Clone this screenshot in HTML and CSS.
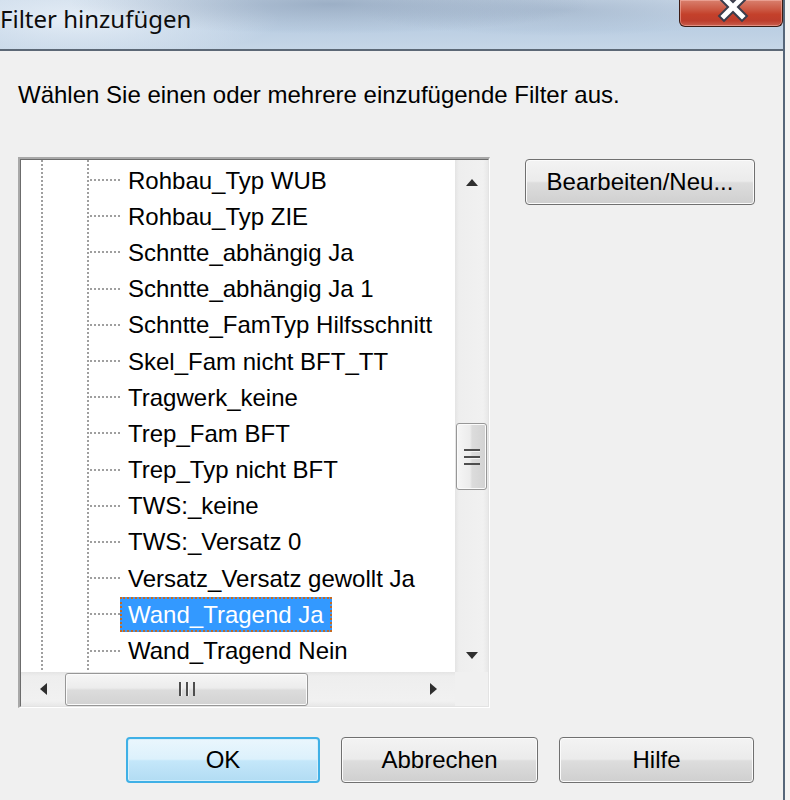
FILE: index.html
```html
<!DOCTYPE html>
<html lang="de">
<head>
<meta charset="utf-8">
<title>Filter hinzufügen</title>
<link rel="stylesheet" href="styles.css">
</head>
<body>
<div class="window">
  <div class="titlebar">
    <span class="title">Filter hinzufügen</span>
    <div class="close">
      <svg class="close-x" width="34" height="28" viewBox="0 0 34 28">
        <path d="M8 1 L26 19 M26 1 L8 19" stroke="#3a3d4c" stroke-width="9" stroke-linecap="square" fill="none"/>
        <path d="M8 1 L26 19 M26 1 L8 19" stroke="#ffffff" stroke-width="5" stroke-linecap="square" fill="none"/>
      </svg>
    </div>
  </div>
  <div class="client">
    <p class="prompt">Wählen Sie einen oder mehrere einzufügende Filter aus.</p>
    <div class="main">
      <div class="treebox">
        <div class="treeinner">
          <div class="tree-area">
            <ul class="tree">
              <li class="row"><span class="conn"></span><span class="label">Rohbau_Typ WUB</span></li>
              <li class="row"><span class="conn"></span><span class="label">Rohbau_Typ ZIE</span></li>
              <li class="row"><span class="conn"></span><span class="label">Schntte_abhängig Ja</span></li>
              <li class="row"><span class="conn"></span><span class="label">Schntte_abhängig Ja 1</span></li>
              <li class="row"><span class="conn"></span><span class="label">Schntte_FamTyp Hilfsschnitt</span></li>
              <li class="row"><span class="conn"></span><span class="label">Skel_Fam nicht BFT_TT</span></li>
              <li class="row"><span class="conn"></span><span class="label">Tragwerk_keine</span></li>
              <li class="row"><span class="conn"></span><span class="label">Trep_Fam BFT</span></li>
              <li class="row"><span class="conn"></span><span class="label">Trep_Typ nicht BFT</span></li>
              <li class="row"><span class="conn"></span><span class="label">TWS:_keine</span></li>
              <li class="row"><span class="conn"></span><span class="label">TWS:_Versatz 0</span></li>
              <li class="row"><span class="conn"></span><span class="label">Versatz_Versatz gewollt Ja</span></li>
              <li class="row"><span class="conn"></span><span class="label selected">Wand_Tragend Ja</span></li>
              <li class="row"><span class="conn"></span><span class="label">Wand_Tragend Nein</span></li>
            </ul>
            <div class="vscroll">
              <div class="arrow-btn up">
                <svg width="12" height="7" viewBox="0 0 12 7"><polygon points="0,7 6,0 12,7" fill="#2f2f2f"/></svg>
              </div>
              <div class="track-gap"></div>
              <div class="vthumb"><span class="vgrip"></span></div>
              <div class="track-fill"></div>
              <div class="arrow-btn down">
                <svg width="12" height="7" viewBox="0 0 12 7"><polygon points="0,0 12,0 6,7" fill="#2f2f2f"/></svg>
              </div>
            </div>
          </div>
          <div class="hrow">
            <div class="hscroll">
              <div class="harrow left">
                <svg width="7" height="12" viewBox="0 0 7 12"><polygon points="7,0 7,12 0,6" fill="#2f2f2f"/></svg>
              </div>
              <div class="hthumb"><span class="hgrip"></span></div>
              <div class="htrack"></div>
              <div class="harrow right">
                <svg width="7" height="12" viewBox="0 0 7 12"><polygon points="0,0 7,6 0,12" fill="#2f2f2f"/></svg>
              </div>
            </div>
            <div class="corner"></div>
          </div>
        </div>
      </div>
      <button class="btn edit">Bearbeiten/Neu...</button>
    </div>
    <div class="actions">
      <button class="btn default ok">OK</button>
      <button class="btn cancel">Abbrechen</button>
      <button class="btn help">Hilfe</button>
    </div>
  </div>
</div>
</body>
</html>
```
FILE: styles.css
```css
html, body {
  margin: 0;
  padding: 0;
}

body {
  width: 790px;
  height: 800px;
  overflow: hidden;
  background: #f3f3f3;
  font-family: "Liberation Sans", Arial, sans-serif;
  font-size: 24px;
  color: #000;
}

.window {
  width: 785px;
  height: 800px;
  box-sizing: border-box;
  border-right: 2px solid #56667a;
  display: flex;
  flex-direction: column;
  background: #f0f0f0;
}

/* ---------- title bar ---------- */
.titlebar {
  height: 51px;
  flex: none;
  box-sizing: border-box;
  border-bottom: 2px solid #5c6876;
  display: flex;
  align-items: flex-start;
  background:
    radial-gradient(ellipse 260px 30px at 330px 4px, rgba(120, 142, 170, 0.55), rgba(120, 142, 170, 0) 100%),
    radial-gradient(ellipse 200px 26px at 560px 10px, rgba(140, 160, 185, 0.45), rgba(140, 160, 185, 0) 100%),
    radial-gradient(ellipse 200px 40px at 80px 20px, rgba(240, 246, 252, 0.8), rgba(240, 246, 252, 0) 100%),
    linear-gradient(to bottom, #c9d8e8 0%, #bccfe3 60%, #c6d6e7 100%);
}

.title {
  font-family: "Noto Sans", "Liberation Sans", sans-serif;
  font-size: 24px;
  line-height: 30px;
  margin-top: 4px;
  color: #0d0d0d;
  white-space: nowrap;
}

.close {
  margin-left: auto;
  width: 104px;
  height: 27px;
  box-sizing: border-box;
  border: 1px solid #3b1b14;
  border-top: none;
  border-radius: 0 0 6px 6px;
  background: linear-gradient(to bottom, #d9806e 0%, #cc5a45 35%, #c4412b 55%, #bd3d2c 80%, #c9604f 100%);
  box-shadow: inset 0 0 0 1px rgba(255, 200, 190, 0.45);
  display: flex;
  justify-content: center;
  align-items: flex-start;
  overflow: hidden;
}

.close-x {
  margin-top: -3px;
  margin-left: 4px;
}

/* ---------- client area ---------- */
.client {
  flex: 1;
  padding-left: 18px;
}

.prompt {
  margin: 30px 0 0;
  line-height: 28px;
  white-space: nowrap;
}

.main {
  display: flex;
  align-items: flex-start;
  margin-top: 48px;
}

.treebox {
  width: 472px;
  height: 551px;
  box-sizing: border-box;
  border-style: solid;
  border-width: 2px 1px 1px 2px;
  border-color: #a8a8a8 #ffffff #ffffff #a8a8a8;
  flex: none;
}

.treeinner {
  height: 100%;
  box-sizing: border-box;
  border-style: solid;
  border-width: 1px;
  border-color: #6c6c6c #e3e3e3 #e3e3e3 #6c6c6c;
  background: #fff;
  display: flex;
  flex-direction: column;
}

.tree-area {
  display: flex;
  height: 512px;
  flex: none;
}

.tree {
  list-style: none;
  margin: 0;
  padding: 2px 0 0;
  width: 434px;
  flex: none;
  overflow: hidden;
  background:
    repeating-linear-gradient(to bottom, #9f9f9f 0 2px, transparent 2px 4px) 20px 0 / 2px 100% no-repeat,
    repeating-linear-gradient(to bottom, #9f9f9f 0 2px, transparent 2px 4px) 66px 0 / 2px 100% no-repeat,
    #fff;
}

.row {
  height: 36.2px;
  display: flex;
  align-items: center;
  padding-left: 69px;
  white-space: nowrap;
}

.conn {
  width: 30px;
  height: 2px;
  flex: none;
  background: repeating-linear-gradient(to right, #9f9f9f 0 2px, transparent 2px 4px);
}

.label {
  line-height: 35px;
  padding: 0 8px;
}

.label.selected {
  background: #3399ff;
  color: #fff;
  outline: 2px dotted #c46a22;
  outline-offset: -2px;
}

/* ---------- vertical scrollbar ---------- */
.vscroll {
  flex: 1;
  display: flex;
  flex-direction: column;
  align-items: center;
  background: linear-gradient(to right, #e4e4e4 0%, #eeeeee 12%, #f1f1f1 85%, #e8e8e8 100%);
}

.arrow-btn {
  width: 100%;
  display: flex;
  justify-content: center;
  align-items: center;
  flex: none;
}

.arrow-btn.up {
  height: 44px;
}

.arrow-btn.down {
  height: 34px;
}

.track-gap {
  height: 219px;
  flex: none;
}

.track-fill {
  flex: 1;
}

.vthumb {
  width: 31px;
  height: 67px;
  box-sizing: border-box;
  border: 1px solid #979797;
  border-radius: 3px;
  background: linear-gradient(to right, #f6f6f6 0%, #ececec 45%, #dcdcdc 52%, #d2d2d2 100%);
  box-shadow: inset 0 0 0 1px #fbfbfb;
  display: flex;
  justify-content: center;
  align-items: center;
  flex: none;
}

.vgrip {
  width: 16px;
  height: 16px;
  background: repeating-linear-gradient(to bottom, #4e4e4e 0 2px, #f4f4f4 2px 3px, transparent 3px 7px);
}

/* ---------- horizontal scrollbar ---------- */
.hrow {
  display: flex;
  height: 34px;
  flex: none;
}

.hscroll {
  width: 434px;
  flex: none;
  display: flex;
  align-items: center;
  background: linear-gradient(to bottom, #e4e4e4 0%, #eeeeee 12%, #f1f1f1 85%, #e8e8e8 100%);
}

.harrow {
  height: 100%;
  display: flex;
  justify-content: center;
  align-items: center;
  flex: none;
}

.harrow.left {
  width: 44px;
}

.harrow.right {
  width: 43px;
}

.hthumb {
  width: 243px;
  height: 33px;
  box-sizing: border-box;
  border: 1px solid #979797;
  border-radius: 3px;
  background: linear-gradient(to bottom, #f6f6f6 0%, #ececec 45%, #dcdcdc 52%, #d2d2d2 100%);
  box-shadow: inset 0 0 0 1px #fbfbfb;
  display: flex;
  justify-content: center;
  align-items: center;
  flex: none;
}

.hgrip {
  width: 16px;
  height: 14px;
  background: repeating-linear-gradient(to right, #4e4e4e 0 2px, #f4f4f4 2px 3px, transparent 3px 7px);
}

.htrack {
  flex: 1;
}

.corner {
  flex: 1;
  background: #f0f0f0;
}

/* ---------- buttons ---------- */
.btn {
  font-family: "Liberation Sans", Arial, sans-serif;
  font-size: 24px;
  color: #000;
  height: 46px;
  padding: 0;
  box-sizing: border-box;
  border: 1px solid #707070;
  border-radius: 4px;
  background: linear-gradient(to bottom, #f3f3f3 0%, #ebebeb 48%, #dddddd 52%, #cfcfcf 100%);
  box-shadow: inset 0 0 0 1px #fbfbfb;
  flex: none;
}

.edit {
  width: 230px;
  margin-left: 35px;
  margin-top: 2px;
}

.actions {
  display: flex;
  gap: 21px;
  margin-top: 29px;
  padding-left: 108px;
}

.ok {
  width: 194px;
}

.cancel {
  width: 197px;
}

.help {
  width: 195px;
}

.btn.default {
  border: 2px solid #3fb0e6;
  background: linear-gradient(to bottom, #eaf6fd 0%, #dcf1fc 48%, #c4e7fa 52%, #b2dcf3 100%);
  box-shadow: inset 0 0 0 1px #d6effb;
}
```
